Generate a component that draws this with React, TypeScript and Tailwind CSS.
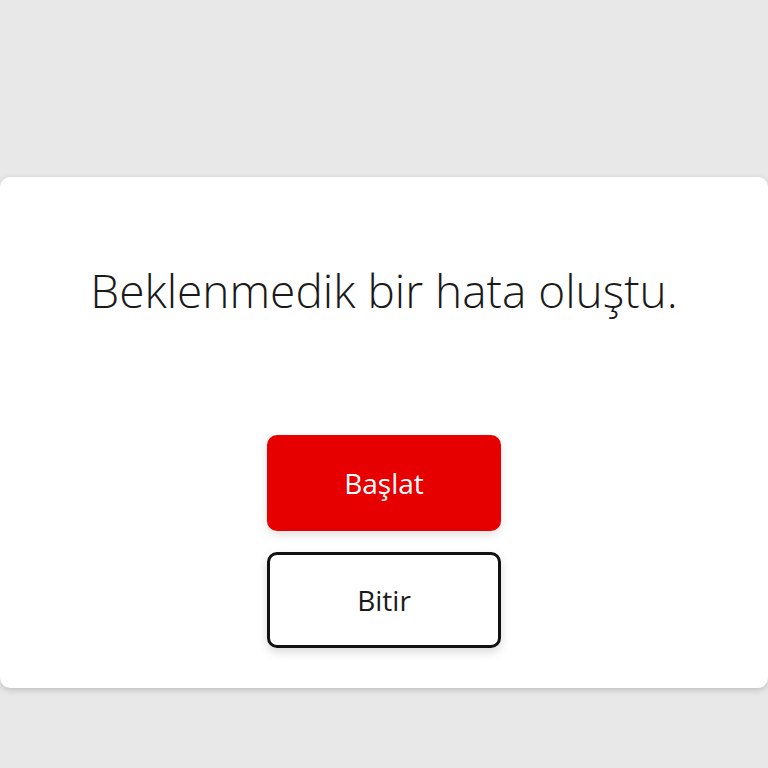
export default function App() {
  return (
    <div
      className="min-h-[768px] w-full bg-[#e8e8e8] pt-[177px]"
      style={{ fontFamily: '"Open Sans", "Liberation Sans", sans-serif' }}
    >
      <div className="flex h-[511px] w-full flex-col items-center rounded-[10px] bg-white shadow-[0_2px_6px_rgba(0,0,0,0.18)]">
        <h1 className="mt-[83px] text-[46px] font-light leading-[60px] text-[#1a1a1a]">
          Beklenmedik bir hata oluştu.
        </h1>
        <div className="mt-[115px] flex flex-col gap-[21px]">
          <button
            type="button"
            className="h-[96px] w-[234px] rounded-[10px] bg-[#e60000] text-[28px] text-white shadow-[0_4px_10px_rgba(0,0,0,0.12)]"
          >
            Başlat
          </button>
          <button
            type="button"
            className="h-[96px] w-[234px] rounded-[10px] border-[3px] border-[#111] bg-white text-[28px] text-[#1a1a1a] shadow-[0_4px_10px_rgba(0,0,0,0.15)]"
          >
            Bitir
          </button>
        </div>
      </div>
    </div>
  );
}
